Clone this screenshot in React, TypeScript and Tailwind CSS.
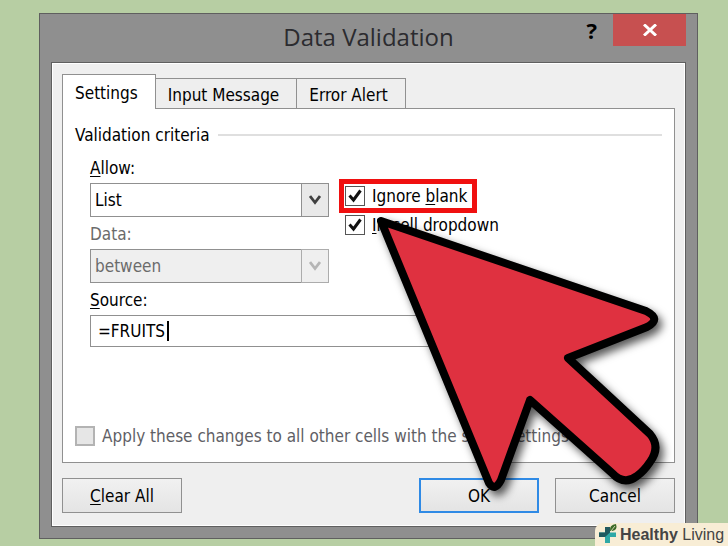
import { useState } from 'react';
import type { ReactNode } from 'react';

const tabs = ['Settings', 'Input Message', 'Error Alert'];

// underlined access key, the rest of the label follows it
function Key({ children }: { children: ReactNode }) {
  return <span className="underline decoration-1 underline-offset-2">{children}</span>;
}

function SelectBox({ id, value, disabled = false }: { id: string; value: string; disabled?: boolean }) {
  return (
    <div className="relative">
      <select
        id={id}
        disabled={disabled}
        defaultValue={value}
        className="block h-[34px] w-full appearance-none border border-[#909090] bg-white pl-1 text-black opacity-100 disabled:bg-[#efefef] disabled:text-[#6b6b6b]"
      >
        <option>{value}</option>
      </select>
      <div
        className={`pointer-events-none absolute inset-y-0 right-0 flex w-7 items-center justify-center border ${
          disabled ? 'border-[#acacac] bg-[#efefef] text-[#b5b5b5]' : 'border-[#909090] bg-[#e9e9e9] text-[#404040]'
        }`}
      >
        <svg viewBox="0 0 12 10" className="h-[10px] w-3" fill="none" stroke="currentColor" strokeWidth="2.8">
          <path d="M1 1 L6 7.5 L11 1" />
        </svg>
      </div>
    </div>
  );
}

function CheckBox({ id, disabled = false, checked = false, children }: { id: string; disabled?: boolean; checked?: boolean; children: ReactNode }) {
  return (
    <div className="flex items-center gap-[7px]">
      <span className="relative size-5 shrink-0">
        <input
          id={id}
          type="checkbox"
          defaultChecked={checked}
          disabled={disabled}
          className="peer block size-5 appearance-none border border-[#555] bg-white disabled:border-2 disabled:border-[#b3b3b3] disabled:bg-[#e6e6e6]"
        />
        <svg
          viewBox="0 0 20 20"
          className="pointer-events-none absolute inset-0 hidden size-5 peer-checked:block"
          fill="none"
          stroke="#111"
          strokeWidth="3"
        >
          <path d="M4.5 9.5 L8.5 14 L15.5 4.5" />
        </svg>
      </span>
      <label htmlFor={id} className={`whitespace-nowrap ${disabled ? 'text-[#5f5f66]' : ''}`}>
        {children}
      </label>
    </div>
  );
}

function DialogButton({ primary = false, children }: { primary?: boolean; children: ReactNode }) {
  return (
    <button
      className={`h-[35px] w-[120px] bg-linear-to-b from-[#f1f1f1] to-[#e4e4e4] ${
        primary ? 'border-2 border-[#2f8ae5]' : 'border border-[#909090]'
      }`}
    >
      {children}
    </button>
  );
}

function Pointer() {
  return (
    <svg
      viewBox="0 0 290 280"
      className="pointer-events-none absolute top-[202px] left-[336px] h-[280px] w-[290px] overflow-visible drop-shadow-[4px_5px_4px_rgba(0,0,0,0.65)]"
      fill="#df3140"
      stroke="#000"
      strokeWidth="8"
      strokeLinejoin="round"
    >
      <path d="M5 5 L270 95 Q286 103 271 111 L192 142 L274 218 Q285 231 274 246 Q268 255 261 260 Q248 270 236 257 L154 184 L125 264 Q119 276 113 267 Z" />
    </svg>
  );
}

function Watermark() {
  return (
    <div className="absolute right-0 bottom-0 flex h-6 w-[133px] items-center gap-[2px] rounded-tl-lg bg-[#f8edd5] pl-[3px] font-['Liberation_Sans'] text-[16px] leading-6 whitespace-nowrap text-[#444]">
      <svg viewBox="0 0 20 22" className="h-[22px] w-5 shrink-0">
        <path d="M7 3h5v5.500h6v4.500h-6v6H7v-6H1V8.500h6z" fill="#2fa8a6" />
        <path d="M7 3h5v5.500L7 13H1V8.500h6z" fill="#20595f" />
        <path d="M12 7 Q11 1 18 0 Q20 6 14 7 Z" fill="#3c6b28" />
        <path d="M13 7 L17 2" stroke="#f8edd5" strokeWidth="0.8" />
      </svg>
      <span>
        <b>Healthy</b> Living
      </span>
    </div>
  );
}

export default function App() {
  const [active, setActive] = useState('Settings');

  return (
    <div className="relative min-h-screen bg-[#b7cea3] pt-[13px] pr-[30px] pb-2 pl-[39px] font-['DejaVu_Sans_Condensed','DejaVu_Sans',sans-serif] text-[17px] leading-5 text-black">
      <div className="relative border border-[#5f5f5f] bg-[#8f8f8f] px-[11px] pb-[11px]">
        {/* title bar */}
        <div className="grid h-12 grid-cols-[1fr_auto_1fr]">
          <span />
          <h1 className="self-center pb-[2px] font-['Open_Sans'] text-[24px] text-[#2b2b2f]">Data Validation</h1>
          <div className="flex items-start justify-end gap-4">
            <button aria-label="Help" className="h-8 font-['Open_Sans'] text-[22px] font-bold">
              ?
            </button>
            <button aria-label="Close" className="flex h-8 w-[73px] items-center justify-center bg-[#c75050]">
              <svg viewBox="0 0 14 12" className="h-3 w-[14px]" fill="none" stroke="#fff" strokeWidth="3">
                <path d="M1 0.5 L13 11.5 M13 0.5 L1 11.5" />
              </svg>
            </button>
          </div>
        </div>

        <div className="border border-[#5f5f5f]">
          <div className="border border-white bg-[#efefef] px-[9px] pt-[10px] pb-3">
            {/* tabs */}
            <div className="flex items-end">
              {tabs.map((tab) => (
                <button
                  key={tab}
                  onClick={() => setActive(tab)}
                  className={`border-t border-r border-[#909090] pt-[2px] pr-[17px] ${
                    active === tab ? 'relative -mb-px h-[35px] border-l bg-white pl-3' : 'h-[30px] bg-[#eeeeee] pl-3'
                  }`}
                >
                  {tab}
                </button>
              ))}
            </div>

            <div className="border border-[#909090] bg-white px-3 pt-4 pb-4">
              <div className="flex items-center gap-2">
                <h2>Validation criteria</h2>
                <div className="h-[2px] flex-1 bg-[#dfdfdf]" />
              </div>

              <div className="mt-[13px] flex gap-[10px] pl-[15px]">
                <div className="w-[239px]">
                  <label htmlFor="allow" className="mb-[5px] block">
                    <Key>A</Key>llow:
                  </label>
                  <SelectBox id="allow" value="List" />
                  <label htmlFor="data" className="mt-[7px] mb-[5px] block text-[#6b6b6b]">
                    Data:
                  </label>
                  <SelectBox id="data" value="between" disabled />
                </div>
                <div className="flex flex-col items-start gap-[2px] pt-[21px]">
                  <div className="border-[5px] border-[#f01010] py-[2px] pr-[5px] pl-[1px]">
                    <CheckBox id="blank" checked>
                      Ignore <Key>b</Key>lank
                    </CheckBox>
                  </div>
                  <div className="pl-[6px]">
                    <CheckBox id="dropdown" checked>
                      <Key>I</Key>n-cell dropdown
                    </CheckBox>
                  </div>
                </div>
              </div>

              <div className="mt-[7px] w-[396px] pl-[15px]">
                <label htmlFor="source" className="mb-[5px] block">
                  <Key>S</Key>ource:
                </label>
                <div className="relative">
                  <input
                    id="source"
                    type="text"
                    defaultValue="=FRUITS"
                    className="block h-8 w-full border border-[#909090] bg-white pl-[7px]"
                  />
                  {/* text cursor */}
                  <span className="absolute top-[6px] left-[77px] h-5 w-[2px] bg-black" />
                </div>
              </div>

              <div className="mt-[79px]">
                <CheckBox id="apply" disabled>
                  Apply these changes to all other cells with the same settings
                </CheckBox>
              </div>
            </div>

            {/* actions */}
            <div className="mt-[15px] flex gap-4">
              <DialogButton>
                <Key>C</Key>lear All
              </DialogButton>
              <div className="flex-1" />
              <DialogButton primary>OK</DialogButton>
              <DialogButton>Cancel</DialogButton>
            </div>
          </div>
        </div>

        <Pointer />
      </div>
      <Watermark />
    </div>
  );
}
